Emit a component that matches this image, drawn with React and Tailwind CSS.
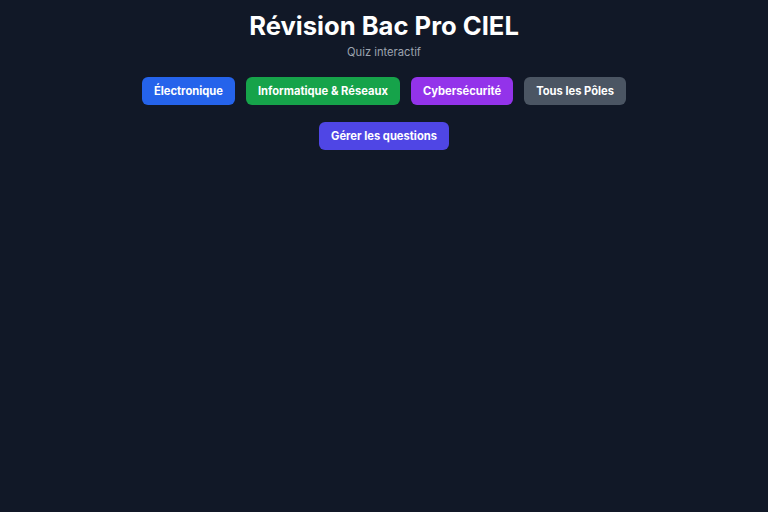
export default function App() {
  return (
    <div className="min-h-screen bg-[#111827] text-white" style={{ fontFamily: "Inter, sans-serif" }}>
      <div className="flex flex-col items-center pt-[10px]">
        <h1 className="text-[25.6px] font-bold leading-8">Révision Bac Pro CIEL</h1>
        <p className="mt-0.5 text-[11.2px] leading-4 text-[#9ca3af]">Quiz interactif</p>
        <div className="mt-[17px] flex gap-[11px]">
          <button className="rounded-md bg-[#2563eb] px-3 py-1.5 text-[11.2px] font-bold leading-4">Électronique</button>
          <button className="rounded-md bg-[#16a34a] px-3 py-1.5 text-[11.2px] font-bold leading-4">Informatique &amp; Réseaux</button>
          <button className="rounded-md bg-[#9333ea] px-3 py-1.5 text-[11.2px] font-bold leading-4">Cybersécurité</button>
          <button className="rounded-md bg-[#4b5563] px-3 py-1.5 text-[11.2px] font-bold leading-4">Tous les Pôles</button>
        </div>
        <button className="mt-[17px] rounded-md bg-[#4f46e5] px-3 py-1.5 text-[11.2px] font-bold leading-4">Gérer les questions</button>
      </div>
    </div>
  );
}
